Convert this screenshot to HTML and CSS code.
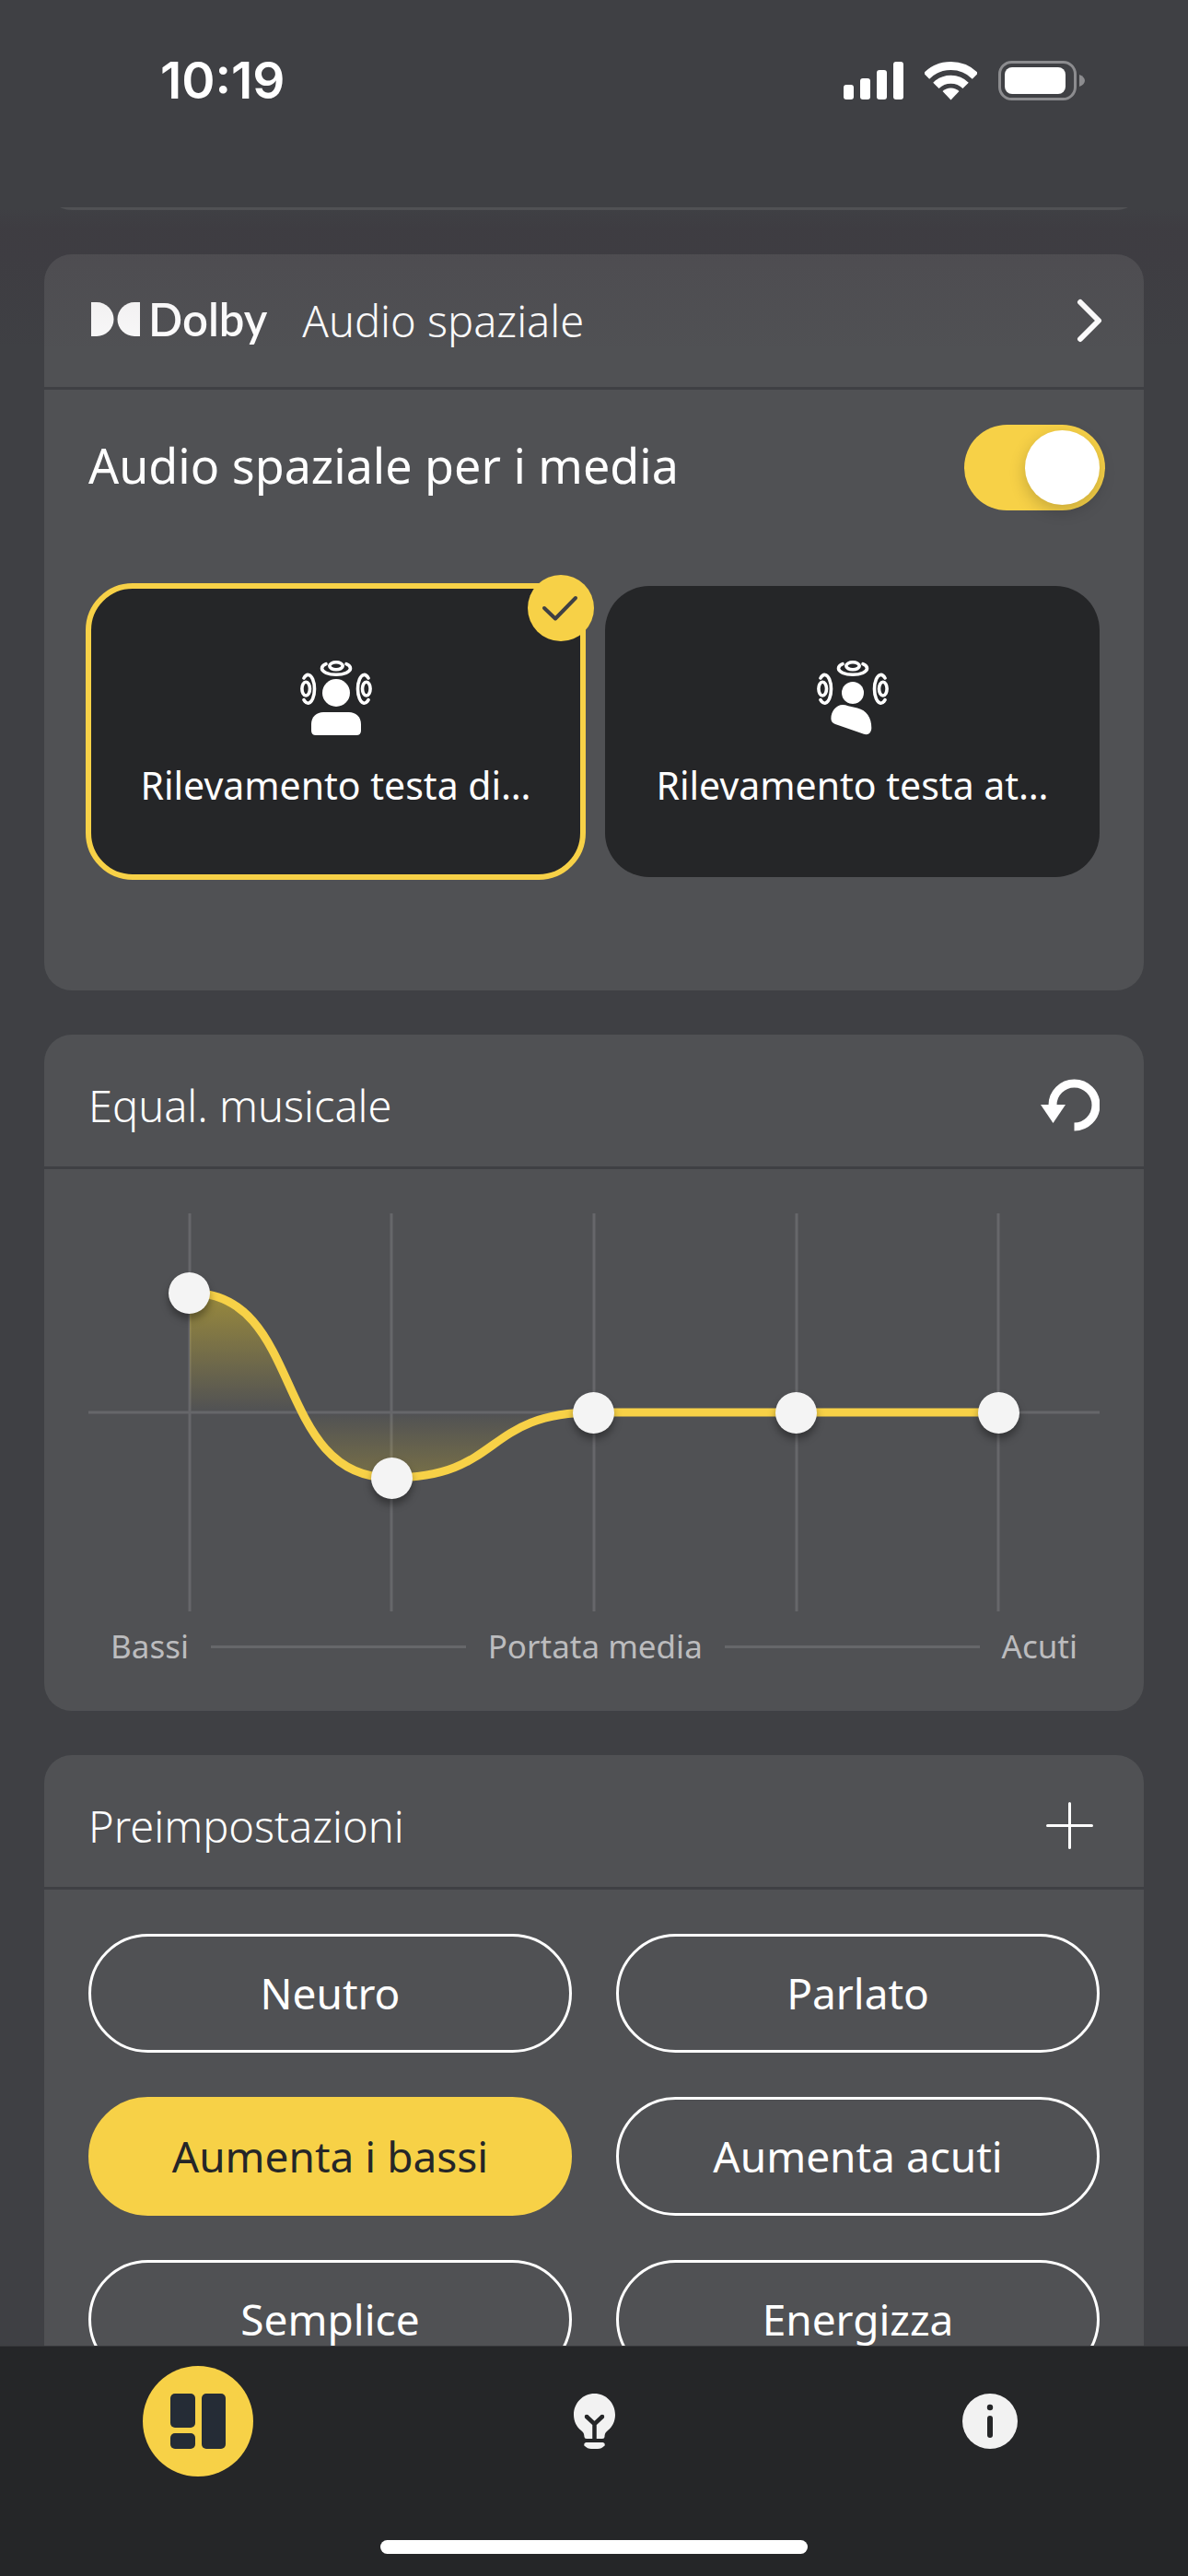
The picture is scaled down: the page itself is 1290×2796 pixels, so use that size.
FILE: index.html
```html
<!DOCTYPE html>
<html lang="it">
<head>
<meta charset="utf-8">
<meta name="viewport" content="width=device-width, initial-scale=1">
<title>Suono</title>
<link rel="stylesheet" href="styles.css">
</head>
<body>
<div class="app">
  <header class="status">
    <div class="status-row">
      <span class="time">10:19</span>
      <div class="status-icons">
        <svg width="65" height="43" viewBox="0 0 65 43" fill="#fff" aria-hidden="true">
          <rect x="0" y="26" width="11" height="16" rx="3"/><rect x="18" y="19" width="11" height="23" rx="3"/>
          <rect x="36" y="10" width="11" height="32" rx="3"/><rect x="54" y="1" width="11" height="41" rx="3"/>
        </svg>
        <svg width="57" height="43" viewBox="0 0 57 43" aria-hidden="true">
          <g fill="none" stroke="#fff" stroke-width="9">
            <path d="M2 16.5A37.5 37.5 0 0 1 55 16.5"/><path d="M12.4 26.9A22.8 22.8 0 0 1 44.6 26.9"/>
          </g>
          <path fill="#fff" d="M28.5 42.5L19.5 33A13 13 0 0 1 37.5 33Z"/>
        </svg>
        <svg width="94" height="43" viewBox="0 0 94 43" aria-hidden="true">
          <rect x="1.5" y="1.5" width="82" height="40" rx="13" fill="none" stroke="#8c8c8f" stroke-width="3"/>
          <rect x="7" y="7" width="66" height="29" rx="8" fill="#fff"/>
          <path d="M88 15C92 16.500 94 19 94 21.500S92 26.500 88 28Z" fill="#8c8c8f"/>
        </svg>
      </div>
    </div>
  </header>

  <main class="content">
    <div class="card card-previous"></div>

    <section class="card">
      <a class="card-head head-link" href="#dolby">
        <span class="dolby">
          <svg width="53" height="37" viewBox="0 0 53 37" fill="#fafafa" aria-hidden="true">
            <path d="M0 0H6A18.500 18.500 0 0 1 6 37H0Z"/><path d="M53 0H47A18.500 18.500 0 0 0 47 37H53Z"/>
          </svg>
          <span class="dolby-name">Dolby</span>
        </span>
        <h2 class="card-title">Audio spaziale</h2>
        <svg class="chevron" width="28" height="48" viewBox="0 0 28 48" fill="none" stroke="#fff" stroke-width="6" stroke-linecap="round" stroke-linejoin="round" aria-hidden="true"><path d="M4 4L24 24L4 44"/></svg>
      </a>
      <div class="switch-row">
        <label class="switch-label" for="spatial">Audio spaziale per i media</label>
        <input class="switch" id="spatial" type="checkbox" role="switch" checked>
      </div>
      <div class="options">
        <label class="option">
          <input class="option-input" type="radio" name="tracking" checked>
          <svg width="82" height="84" viewBox="0 0 82 84" aria-hidden="true">
            <g fill="none" stroke="#fff" stroke-width="3.600" stroke-linecap="round">
              <path d="M30 4.700A15.500 6.800 0 1 0 52 4.700"/><ellipse cx="41" cy="6.800" rx="7.200" ry="4"/>
              <path d="M6 20A7 15.400 0 1 1 6 43.600"/><ellipse cx="8.200" cy="31.600" rx="4.300" ry="7.400"/>
              <path d="M76 20A7 15.400 0 1 0 76 43.600"/><ellipse cx="73.800" cy="31.600" rx="4.300" ry="7.400"/>
            </g>
            <circle cx="41" cy="36" r="15" fill="#fff"/>
            <path fill="#fff" d="M14 70C14 62 20 57 27 57H55C62 57 68 62 68 70V77Q68 82 63 82H19Q14 82 14 77Z"/>
          </svg>
          <span class="option-text">Rilevamento testa di…</span>
          <span class="badge"><svg width="72" height="72" viewBox="0 0 72 72" fill="none" stroke="#3f4044" stroke-width="4" stroke-linecap="round" stroke-linejoin="round" aria-hidden="true"><path d="M18 36L30 47.500L52 25"/></svg></span>
        </label>
        <label class="option">
          <input class="option-input" type="radio" name="tracking">
          <svg width="82" height="84" viewBox="0 0 82 84" aria-hidden="true">
            <g fill="none" stroke="#fff" stroke-width="3.600" stroke-linecap="round">
              <path d="M30 4.700A15.500 6.800 0 1 0 52 4.700"/><ellipse cx="41" cy="6.800" rx="7.200" ry="4"/>
              <path d="M6 20A7 15.400 0 1 1 6 43.600"/><ellipse cx="8.200" cy="31.600" rx="4.300" ry="7.400"/>
              <path d="M76 20A7 15.400 0 1 0 76 43.600"/><ellipse cx="73.800" cy="31.600" rx="4.300" ry="7.400"/>
            </g>
            <circle cx="41" cy="36" r="12" fill="#fff"/>
            <path fill="#fff" d="M17.400 64C17.400 56 23 49 30 49C32 49 34 49.500 36 50.200L46 52.500C56 55 61.300 63 61.300 74C61.300 79 58 82.500 53 80.800L22 70C19 69 17.400 67 17.400 64Z"/>
          </svg>
          <span class="option-text">Rilevamento testa at…</span>
          <span class="badge"><svg width="72" height="72" viewBox="0 0 72 72" fill="none" stroke="#3f4044" stroke-width="4" stroke-linecap="round" stroke-linejoin="round" aria-hidden="true"><path d="M18 36L30 47.500L52 25"/></svg></span>
        </label>
      </div>
    </section>

    <section class="card">
      <div class="card-head head-low">
        <h2 class="card-title">Equal. musicale</h2>
        <button class="icon-button" type="button" aria-label="Ripristina">
          <svg width="64" height="58" viewBox="0 0 64 58" aria-hidden="true">
            <path d="M13 28.500A23.500 23.500 0 1 1 36.500 52" fill="none" stroke="#fff" stroke-width="9"/>
            <path d="M0 28H27L13.500 48Z" fill="#fff"/>
          </svg>
        </button>
      </div>
      <div class="plot">
        <svg class="curve" viewBox="0 0 1098 432" preserveAspectRatio="none" aria-hidden="true">
          <defs>
            <linearGradient id="gain" gradientUnits="userSpaceOnUse" x1="0" y1="0" x2="0" y2="432">
              <stop offset="0" stop-color="#f4d020" stop-opacity="0.750"/>
              <stop offset="0.500" stop-color="#f4d020" stop-opacity="0"/>
              <stop offset="1" stop-color="#f4d020" stop-opacity="0.750"/>
            </linearGradient>
          </defs>
          <g stroke="#66676a" stroke-width="3">
            <path d="M110 0V432M329 0V432M549 0V432M769 0V432M988 0V432"/><path d="M0 216H1098"/>
          </g>
          <path fill="url(#gain)" d="M110 216V86C236 86 199 287 329 287C450 287 428 216 549 216Z"/>
          <path fill="none" stroke="#f7d147" stroke-width="9" d="M110 86C236 86 199 287 329 287C450 287 428 216 549 216H988"/>
        </svg>
        <div class="bands">
          <input class="band" type="range" min="-100" max="100" value="67" aria-label="Bassi">
          <input class="band" type="range" min="-100" max="100" value="-37" aria-label="Medio-bassi">
          <input class="band" type="range" min="-100" max="100" value="0" aria-label="Portata media">
          <input class="band" type="range" min="-100" max="100" value="0" aria-label="Medio-acuti">
          <input class="band" type="range" min="-100" max="100" value="0" aria-label="Acuti">
        </div>
      </div>
      <div class="scale">
        <span>Bassi</span><span class="scale-line"></span><span>Portata media</span><span class="scale-line"></span><span>Acuti</span>
      </div>
    </section>

    <section class="card">
      <div class="card-head head-low">
        <h2 class="card-title">Preimpostazioni</h2>
        <button class="icon-button plus" type="button" aria-label="Aggiungi">
          <svg width="51" height="51" viewBox="0 0 51 51" stroke="#fff" stroke-width="3" stroke-linecap="round" aria-hidden="true"><path d="M25.500 1.500V49.500M1.500 25.500H49.500"/></svg>
        </button>
      </div>
      <div class="presets">
        <button class="preset" type="button">Neutro</button>
        <button class="preset" type="button">Parlato</button>
        <button class="preset active" type="button" aria-pressed="true">Aumenta i bassi</button>
        <button class="preset" type="button">Aumenta acuti</button>
        <button class="preset" type="button">Semplice</button>
        <button class="preset" type="button">Energizza</button>
      </div>
    </section>
  </main>

  <footer class="tabbar">
    <nav class="tabs">
      <a class="tab" href="#home" aria-label="Stato" aria-current="page">
        <span class="tab-disc">
          <svg width="60" height="60" viewBox="0 0 60 60" fill="#252c36" aria-hidden="true">
            <rect x="0" y="0" width="27" height="37" rx="5"/><rect x="0" y="43" width="27" height="17" rx="5"/><rect x="34" y="0" width="26" height="60" rx="5"/>
          </svg>
        </span>
      </a>
      <a class="tab" href="#tips" aria-label="Scopri">
        <svg width="45" height="60" viewBox="0 0 45 60" fill="#f2f2f2" aria-hidden="true">
          <path d="M22.500 0C10 0 0 10 0 23C0 30 3 36 8 40C11 42.500 11.300 44 11.500 47Q11.500 49 14 49H31Q33.500 49 33.500 47C33.700 44 34 42.500 37 40C42 36 45 30 45 23C45 10 35 0 22.500 0Z"/>
          <path d="M13.500 53H31.500Q34.500 53.500 33.500 56.500Q30 60 26 60H19Q15 60 11.500 56.500Q10.500 53.500 13.500 53Z"/>
          <path d="M14 25L22.500 33L31 25M22.500 33V50" fill="none" stroke="#252628" stroke-width="4.500" stroke-linejoin="round"/>
          <path d="M14 25V25M31 25V25" stroke="#252628" stroke-width="4.500" stroke-linecap="round"/>
        </svg>
      </a>
      <a class="tab" href="#info" aria-label="Info">
        <svg width="60" height="60" viewBox="0 0 60 60" aria-hidden="true">
          <circle cx="30" cy="30" r="30" fill="#f2f2f2"/><circle cx="30" cy="15" r="3.200" fill="#252628"/>
          <path d="M30 27V45" stroke="#252628" stroke-width="6" stroke-linecap="round"/>
        </svg>
      </a>
    </nav>
    <div class="home-indicator"></div>
  </footer>
</div>
</body>
</html>
```
FILE: styles.css
```css
:root {
  --page: #3f4044;
  --card: #505154;
  --dark: #252628;
  --accent: #f7d147;
}

* { box-sizing: border-box; }

body {
  margin: 0;
  background: var(--page);
  color: #fff;
  font-family: "Noto Sans", "Open Sans", sans-serif;
}

svg { display: block; flex: none; }

button { font: inherit; color: inherit; cursor: pointer; }

a { color: inherit; text-decoration: none; }

.app {
  display: flex;
  flex-direction: column;
  height: 100vh;
}

/* Status bar */
.status {
  position: relative;
  z-index: 1;
  flex: none;
  padding-bottom: 51px;
}

.status::after {
  content: "";
  position: absolute;
  top: 100%;
  left: 0;
  right: 0;
  height: 160px;
  background: linear-gradient(rgba(50, 20, 40, 0), rgba(50, 20, 40, 0.08) 24px, rgba(50, 20, 40, 0.07) 56px, rgba(50, 20, 40, 0));
  pointer-events: none;
}

.status-row {
  display: flex;
  align-items: center;
  justify-content: space-between;
  height: 174px;
  padding: 0 112px 0 174px;
}

.time {
  font: 600 55px/64px Inter, sans-serif;
}

.status-icons { display: flex; gap: 23px; }

/* Scrolling content */
.content {
  flex: 1;
  display: flex;
  flex-direction: column;
  gap: 48px;
  min-height: 0;
  padding: 0 48px 48px;
  overflow-y: auto;
  scrollbar-width: none;
}

.card {
  flex: none;
  border-radius: 30px;
  background: var(--card);
}

.card-previous {
  height: 60px;
  margin-top: -57px;
}

.card-head {
  display: flex;
  align-items: center;
  height: 147px;
  padding: 0 48px;
  border-bottom: 3px solid var(--page);
}

.head-low {
  height: 146px;
  padding-top: 10px;
}

.card-title {
  flex: 1;
  margin: 0;
  font-size: 47px;
  line-height: 60px;
  font-weight: 300;
}

.head-link {
  gap: 38px;
  padding-right: 45px;
}

.dolby {
  display: flex;
  align-items: center;
  gap: 9px;
  padding: 0 0 4px 3px;
}

.dolby-name {
  font: 600 49px/60px Lato, sans-serif;
}

.icon-button {
  padding: 0;
  border: 0;
  background: none;
}

.plus { padding-right: 7px; }

/* Spatial audio */
.switch-row {
  display: flex;
  align-items: flex-start;
  justify-content: space-between;
  padding: 38px 42px 0 48px;
}

.switch-label {
  padding-top: 12px;
  font-size: 52px;
  line-height: 64px;
}

.switch {
  appearance: none;
  display: flex;
  width: 153px;
  height: 93px;
  margin: 0;
  padding: 6px;
  border-radius: 48px;
  background: #77787b;
}

.switch::before {
  content: "";
  width: 81px;
  height: 81px;
  border-radius: 50%;
  background: #fff;
  box-shadow: 0 6px 18px rgba(0, 0, 0, 0.2);
}

.switch:checked {
  justify-content: flex-end;
  background: var(--accent);
}

.options {
  display: grid;
  grid-template-columns: 1fr 1fr;
  gap: 24px;
  padding: 82px 48px 123px;
}

.option {
  position: relative;
  display: flex;
  flex-direction: column;
  align-items: center;
  gap: 24px;
  height: 316px;
  padding: 80px 24px 0;
  border-radius: 48px;
  background: var(--dark);
}

.option:has(:checked)::before {
  content: "";
  position: absolute;
  inset: -3px;
  border: 6px solid var(--accent);
  border-radius: 51px;
}

.option-input {
  position: absolute;
  opacity: 0;
}

.option-text {
  font-size: 41px;
  line-height: 56px;
}

.badge {
  display: none;
  position: absolute;
  top: -12px;
  right: -12px;
  border-radius: 50%;
  background: var(--accent);
}

.option:has(:checked) .badge { display: block; }

/* Equalizer */
.plot {
  position: relative;
  height: 432px;
  margin: 48px 48px 0;
}

.curve {
  width: 100%;
  height: 100%;
}

.bands {
  position: absolute;
  inset: 0;
  display: grid;
  grid-template-columns: repeat(5, 1fr);
  justify-items: center;
}

.band {
  appearance: none;
  writing-mode: vertical-lr;
  direction: rtl;
  width: 45px;
  height: 432px;
  margin: 0;
  background: none;
}

.band::-webkit-slider-thumb {
  appearance: none;
  width: 45px;
  height: 45px;
  border-radius: 50%;
  background: #f4f4f4;
  box-shadow: 0 6px 9px rgba(0, 0, 0, 0.35);
}

.scale {
  display: flex;
  align-items: center;
  gap: 24px;
  padding: 14px 72px 46px;
  color: #bcbcbe;
  font-size: 35px;
  line-height: 48px;
}

.scale-line {
  flex: 1;
  height: 3px;
  background: #66676a;
}

/* Presets */
.presets {
  display: grid;
  grid-template-columns: 1fr 1fr;
  gap: 48px;
  padding: 48px;
}

.preset {
  height: 129px;
  padding: 0 0 2px;
  border: 3px solid #fff;
  border-radius: 66px;
  background: none;
  font-size: 46px;
}

.preset.active {
  border-color: var(--accent);
  background: var(--accent);
  color: var(--dark);
}

/* Tab bar */
.tabbar {
  flex: none;
  display: flex;
  flex-direction: column;
  align-items: center;
  gap: 69px;
  padding: 21px 0 24px;
  border-top: 1px solid #37383b;
  background: var(--dark);
}

.tabs {
  display: grid;
  grid-template-columns: repeat(3, 1fr);
  width: 100%;
}

.tab {
  display: flex;
  align-items: center;
  justify-content: center;
  height: 120px;
}

.tab-disc {
  padding: 30px;
  border-radius: 50%;
  background: var(--accent);
}

.home-indicator {
  width: 36%;
  height: 15px;
  border-radius: 8px;
  background: #fff;
}
```
